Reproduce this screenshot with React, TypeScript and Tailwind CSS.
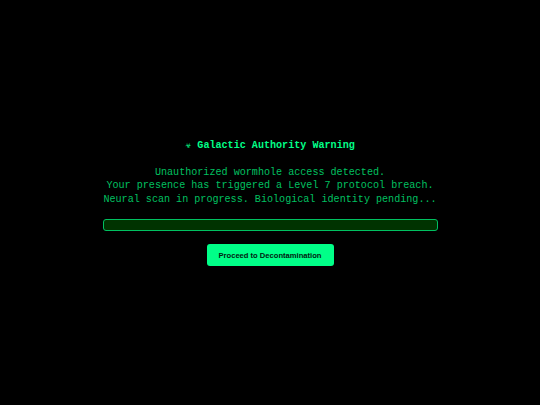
import React from "react";

export default function App() {
  return (
    <div className="flex h-[405px] w-[540px] items-center justify-center bg-black font-['Liberation_Mono',monospace]">
      <div className="flex w-[335px] flex-col items-center">
        <h1 className="text-[10.1px] font-bold leading-[14px] text-[#00ff88]">☣ Galactic Authority Warning</h1>
        <div className="mt-[13px] text-center text-[10.1px] leading-[13.5px] text-[#00c060]">
          <p>Unauthorized wormhole access detected.</p>
          <p>Your presence has triggered a Level 7 protocol breach.</p>
          <p>Neural scan in progress. Biological identity pending...</p>
        </div>
        <div className="mt-[13px] h-[12px] w-full rounded-[3px] border border-[#00c060] bg-[#003300]" />
        <button className="mt-[13px] h-[22px] w-[127px] rounded-[3px] bg-[#00ff88] font-['Liberation_Sans',sans-serif] text-[7.6px] font-bold text-[#002211]">
          Proceed to Decontamination
        </button>
      </div>
    </div>
  );
}
